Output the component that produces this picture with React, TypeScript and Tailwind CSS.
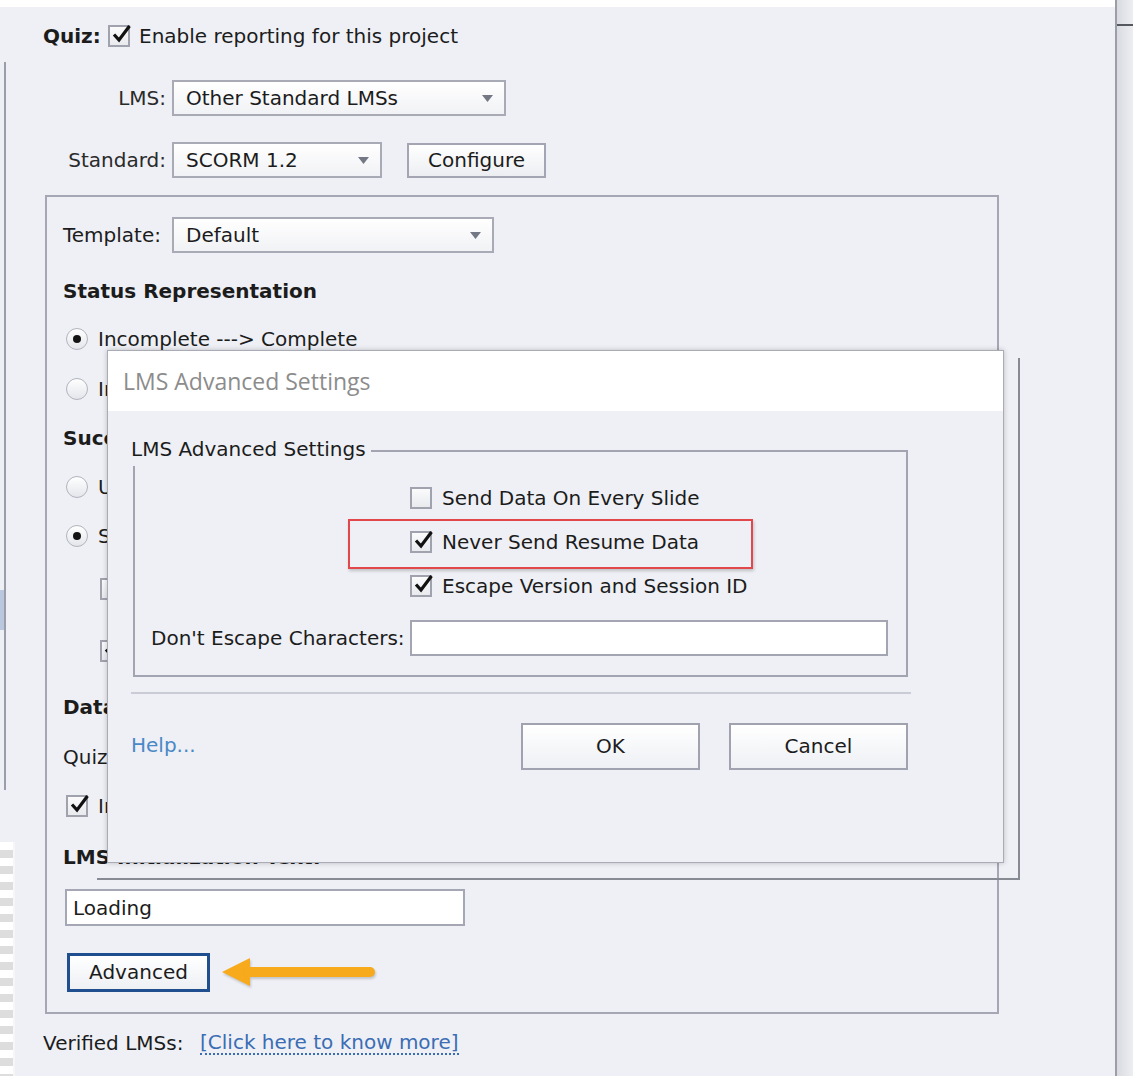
import type { ReactNode } from "react";

// Captivate-style "Quiz > Reporting" preferences with the LMS Advanced Settings
// dialog open on top of it. Everything is DejaVu Sans at 20px, which lands on
// the widths of the Tahoma text in the original.

function Check({ on }: { on?: boolean }) {
  return (
    <span className="relative inline-block h-[22px] w-[22px] shrink-0 border-2 border-[#a0a3ae] bg-linear-to-b from-[#fbfbfc] to-[#e8eaee]">
      {on && (
        <svg className="absolute -top-[4px] left-[1px] h-[22px] w-[22px]" viewBox="0 0 22 22">
          <path d="M3 11.5 L8 17 L18.5 3" fill="none" stroke="#111" strokeWidth="3.2" />
        </svg>
      )}
    </span>
  );
}

function Radio({ on }: { on?: boolean }) {
  return (
    <span className="flex h-[22px] w-[22px] shrink-0 items-center justify-center rounded-full border-[1.5px] border-[#b1b4bd] bg-linear-to-b from-white to-[#e4e6eb]">
      {on && <span className="h-[8px] w-[8px] rounded-full bg-[#141414]" />}
    </span>
  );
}

function Select({ value, w }: { value: string; w: string }) {
  return (
    <div
      className={`flex h-[36px] items-center justify-between border-2 border-[#a8abb6] bg-linear-to-b from-white to-[#f1f2f5] pl-[12px] pr-[11px] ${w}`}
    >
      <span>{value}</span>
      <svg width="11" height="7" viewBox="0 0 11 7">
        <path d="M0 0 H11 L5.5 7 Z" fill="#737884" />
      </svg>
    </div>
  );
}

function Row({ children, className = "" }: { children: ReactNode; className?: string }) {
  return <div className={`flex items-center ${className}`}>{children}</div>;
}

function Arrow() {
  return (
    <svg width="158" height="34" viewBox="0 0 158 34" className="ml-[10px] drop-shadow-[1px_2px_1px_rgba(0,0,0,0.18)]">
      <path d="M2 16 L30 2 L30 30 Z" fill="#f6aa1c" />
      <path d="M28 16 H150" stroke="#f6aa1c" strokeWidth="10" strokeLinecap="round" />
    </svg>
  );
}

function LmsDialog() {
  return (
    <>
      {/* the second window frame peeking out behind the dialog */}
      <div className="absolute left-[97px] top-[358px] h-[522px] w-[923px] border-b-2 border-r-2 border-[#878a92]" />
      <div className="absolute left-[107px] top-[350px] flex h-[513px] w-[897px] flex-col border border-[#a9acb5] bg-[#eef0f5] shadow-[0_0_5px_rgba(0,0,0,0.22)]">
        <div className="flex h-[60px] items-center bg-white pl-[15px] font-['Open_Sans',sans-serif] text-[23px] text-[#8c8c8c]">
          LMS Advanced Settings
        </div>

        <div className="relative ml-[25px] mt-[39px] h-[227px] w-[775px] border-2 border-[#a2a5b1]">
          <div className="absolute -left-[4px] -top-[16px] h-[30px] bg-[#eef0f5] pr-[5px] leading-[26px]">
            LMS Advanced Settings
          </div>
          <div className="flex flex-col pl-[275px] pt-[35px]">
            <Row className="h-[22px] gap-[10px]">
              <Check />
              <span>Send Data On Every Slide</span>
            </Row>
            <Row className="mt-[22px] h-[22px] gap-[10px]">
              <Check on />
              <span>Never Send Resume Data</span>
            </Row>
            <Row className="mt-[22px] h-[22px] gap-[10px]">
              <Check on />
              <span>Escape Version and Session ID</span>
            </Row>
          </div>
          <Row className="mt-[23px] h-[36px] pl-[16px]">
            <span className="w-[259px]">Don&apos;t Escape Characters:</span>
            <div className="h-[36px] w-[478px] border-2 border-[#a3a6b2] bg-white" />
          </Row>
        </div>

        <div className="ml-[23px] mt-[15px] h-[2px] w-[780px] bg-[#c9ccd4]" />

        <Row className="ml-[23px] mt-[29px] h-[47px]">
          <span className="-mt-[3px] w-[390px] text-[#4a88c6]">Help...</span>
          <button className="flex h-[47px] w-[179px] items-center justify-center border-2 border-[#a0a3af] bg-linear-to-b from-white to-[#eef0f4] pb-[2px]">
            OK
          </button>
          <button className="ml-[29px] flex h-[47px] w-[179px] items-center justify-center border-2 border-[#a0a3af] bg-linear-to-b from-white to-[#eef0f4] pb-[2px]">
            Cancel
          </button>
        </Row>

        {/* red callout around the option that matters */}
        <div className="absolute left-[240px] top-[168px] h-[50px] w-[405px] border-2 border-[#e2474c] shadow-[1px_2px_3px_rgba(0,0,0,0.2)]" />
      </div>
    </>
  );
}

export default function App() {
  return (
    <div className="relative flex h-[1076px] w-[1133px] overflow-hidden bg-[#eef0f5] font-['DejaVu_Sans',sans-serif] text-[20px] text-[#1c1c1c]">
      <div className="flex w-[1115px] flex-col">
        <div className="h-[7px] bg-white" />
        <div className="flex flex-1">
          {/* neighbouring panel edge + transparency checker */}
          <div className="flex w-[16px] flex-col">
            <div className="mt-[55px] flex h-[728px] w-[6px] flex-col border-r-2 border-[#9a9eab]">
              <div className="mt-[528px] h-[40px] w-[4px] bg-[#b9c8df]" />
            </div>
            <div className="mt-[52px] w-[15px] flex-1 border-r-2 border-[#f6f6f6] bg-[repeating-linear-gradient(180deg,#ffffff_0px,#ffffff_8px,#dddddd_8px,#dddddd_16px)]" />
          </div>

          <div className="flex flex-1 flex-col pl-[27px]">
            <Row className="mt-[18px] h-[22px]">
              <span className="w-[65px] font-bold">Quiz:</span>
              <Check on />
              <span className="ml-[9px]">Enable reporting for this project</span>
            </Row>

            <Row className="mt-[33px] h-[36px]">
              <span className="w-[123px] text-right text-[#2a2a2a]">LMS:</span>
              <span className="ml-[6px]">
                <Select value="Other Standard LMSs" w="w-[334px]" />
              </span>
            </Row>

            <Row className="mt-[26px] h-[36px]">
              <span className="w-[123px] text-right text-[#2a2a2a]">Standard:</span>
              <span className="ml-[6px]">
                <Select value="SCORM 1.2" w="w-[210px]" />
              </span>
              <button className="ml-[25px] flex h-[35px] w-[139px] items-center justify-center border-2 border-[#a3a6b2] bg-linear-to-b from-white to-[#eceef2]">
                Configure
              </button>
            </Row>

            <div className="ml-[2px] mt-[17px] flex h-[819px] w-[954px] flex-col border-2 border-[#a5a8b4] pl-[16px]">
              <Row className="mt-[20px] h-[36px]">
                <span className="w-[109px]">Template:</span>
                <Select value="Default" w="w-[322px]" />
              </Row>

              <div className="mt-[26px] h-[24px] font-bold leading-[24px]">Status Representation</div>
              <Row className="ml-[3px] mt-[25px] h-[22px] gap-[10px]">
                <Radio on />
                <span>Incomplete ---&gt; Complete</span>
              </Row>
              <Row className="ml-[3px] mt-[28px] h-[22px] gap-[10px]">
                <Radio />
                <span>Incomplete ---&gt; Passed/Failed</span>
              </Row>

              <div className="mt-[26px] h-[24px] font-bold leading-[24px]">Success/Completion Criteria</div>
              <Row className="ml-[3px] mt-[26px] h-[22px] gap-[10px]">
                <Radio />
                <span>User Access</span>
              </Row>
              <Row className="ml-[3px] mt-[27px] h-[22px] gap-[10px]">
                <Radio on />
                <span>Slide views and/or quiz</span>
              </Row>
              <Row className="ml-[37px] mt-[30px] h-[23px] gap-[10px]">
                <Check />
                <span>Slide Views:</span>
              </Row>
              <Row className="ml-[37px] mt-[40px] h-[22px] gap-[10px]">
                <Check on />
                <span>Quiz:</span>
              </Row>

              <div className="mt-[33px] h-[24px] font-bold leading-[24px]">Data To Report</div>
              <div className="mt-[26px] h-[24px] leading-[24px]">Quiz Score:</div>
              <Row className="ml-[3px] mt-[26px] h-[22px] gap-[10px]">
                <Check on />
                <span>Interaction Data</span>
              </Row>

              <div className="mt-[28px] h-[24px] font-bold leading-[24px]">LMS Initialization Text:</div>
              <div className="ml-[2px] mt-[20px] flex h-[37px] w-[400px] items-center border-2 border-[#a5a8b4] bg-white pl-[6px]">
                Loading
              </div>

              <Row className="ml-[4px] mt-[27px] h-[39px]">
                <button className="flex h-[39px] w-[143px] items-center justify-center border-[3px] border-[#1f4f8f] bg-linear-to-b from-white to-[#eef0f4] pb-[2px]">
                  Advanced
                </button>
                <Arrow />
              </Row>
            </div>

            <Row className="mt-[17px] h-[24px]">
              <span className="w-[157px]">Verified LMSs:</span>
              <span className="border-b-2 border-dotted border-[#3b6db4] leading-[22px] text-[#3b6db4]">
                [Click here to know more]
              </span>
            </Row>
          </div>
        </div>
      </div>

      {/* window edge on the right */}
      <div className="flex w-[18px] flex-col border-l-2 border-[#9b9ea6] bg-linear-to-r from-[#d9dbe0] to-[#eceef2]">
        <div className="mt-[24px] h-[2px] bg-[#55585f]" />
      </div>

      <LmsDialog />
    </div>
  );
}
